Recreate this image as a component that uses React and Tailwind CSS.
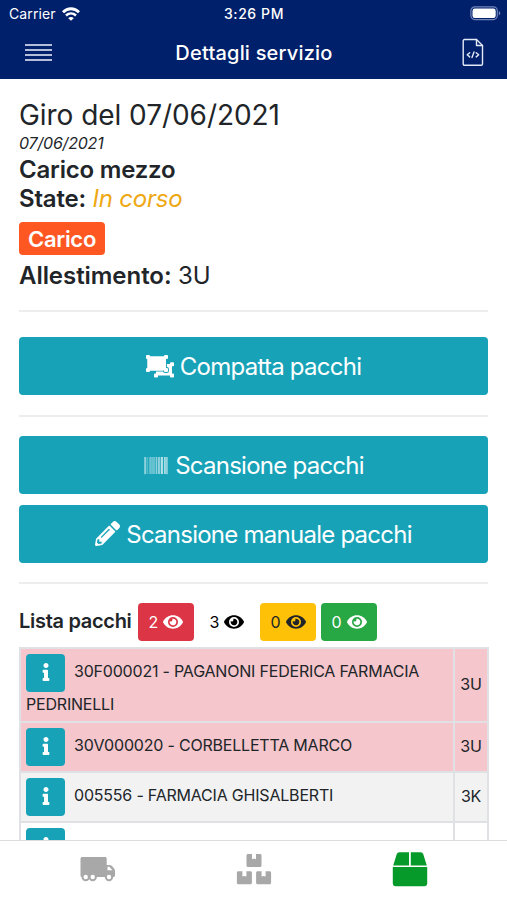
import React from "react";
import { FaBarcode, FaEye, FaInfo, FaPencilAlt } from "react-icons/fa";

function StatusBar() {
  return (
    <div className="flex h-[27px] items-center justify-between pr-[6px] pl-[9px] text-[14px] leading-none">
      <div className="flex w-[100px] items-center gap-[6px]">
        <span className="tracking-[0.1px]">Carrier</span>
        <svg className="h-[14px] w-[18px]" viewBox="0 0 18 14" fill="none" stroke="white">
          <path d="M1 5.2C5.6.6 12.4.6 17 5.2" strokeWidth="2.8" />
          <path d="M4 8.5c3-2.8 7-2.8 10 0" strokeWidth="2.5" />
          <path d="M9 13.8 6.200 11.200c1.600-1.500 4-1.500 5.600 0z" fill="white" stroke="none" />
        </svg>
      </div>
      <span className="mr-[2px] text-[14px] font-medium tracking-[0.6px]">3:26 PM</span>
      <div className="flex w-[100px] justify-end">
        <svg className="h-[15px] w-[31px]" viewBox="0 0 31 15">
          <rect x=".9" y=".8" width="26.4" height="12.8" rx="4" fill="none" stroke="#7485b8" strokeWidth="1.2" />
          <rect x="2.5" y="2.5" width="23.2" height="9.6" rx="2.4" fill="white" />
          <path d="M28.8 5c2 .8 2 3.700 0 4.500z" fill="#7485b8" />
        </svg>
      </div>
    </div>
  );
}

function Header() {
  return (
    <header className="h-[79px] shrink-0 bg-[#00206b] text-white">
      <StatusBar />
      <div className="flex h-[50px] items-center justify-between pr-[23px] pl-[25px]">
        <div className="flex w-[27px] flex-col gap-[3px]">
          <div className="h-[2px] bg-[#b4bedb]" />
          <div className="h-[2px] bg-[#b4bedb]" />
          <div className="h-[2px] bg-[#b4bedb]" />
          <div className="h-[2px] bg-[#b4bedb]" />
        </div>
        <h1 className="mr-[6px] pt-[1px] text-[20px] font-medium tracking-[0.2px]">Dettagli servizio</h1>
        <svg className="h-[29px] w-[22px]" viewBox="0 0 22 29" fill="none" stroke="#e4e9f6" strokeWidth="1.4" strokeLinejoin="round" strokeLinecap="round">
          <path d="M2.500 1.500H14.500l6 6v18.500a1.300 1.300 0 0 1-1.300 1.300H2.500A1.300 1.300 0 0 1 1.200 26V2.800a1.300 1.300 0 0 1 1.300-1.300z" />
          <path d="M14.500 1.500v6h6" />
          <path d="M7.700 14.700 5.200 16.800l2.500 2.100M14.200 14.700l2.500 2.100-2.500 2.100M12 14l-2 5.500" strokeWidth="1.4" />
        </svg>
      </div>
    </header>
  );
}

function StackedFramesIcon() {
  return (
    <svg className="h-[23px] w-[28px]" viewBox="0 0 28 23" fill="white">
      <path d="M10 9h16v11.500H10z" />
      <rect x="24" y="7.200" width="4" height="4" rx="1" />
      <rect x="24" y="18.500" width="4" height="4" rx="1" />
      <rect x="8" y="18.500" width="4" height="4" rx="1" />
      <g stroke="#17a2b8" strokeWidth="1.8" paintOrder="stroke">
        <path d="M1.500 1.500h18.500v14H1.500z" />
        <rect x="18" y="13" width="4" height="4" rx="1" />
      </g>
      <path d="M1.500 1.500h18.500v14H1.500z" />
      <rect x="0" y="0" width="4" height="4" rx="1" />
      <rect x="18" y="0" width="4" height="4" rx="1" />
      <rect x="0" y="13" width="4" height="4" rx="1" />
    </svg>
  );
}

function ActionButton({ icon, children }) {
  return (
    <button className="flex h-[58px] w-full items-center justify-center gap-[6px] rounded-[4px] bg-[#17a2b8] text-[24px] tracking-[-0.75px] text-white">
      {icon}
      <span className="pt-[1px]">{children}</span>
    </button>
  );
}

function Counter({ value, className }) {
  return (
    <button className={`flex h-[38px] w-[56px] items-center justify-center gap-[5px] rounded-[4px] text-[16px] ${className}`}>
      <span>{value}</span>
      <FaEye className="mb-[1px] h-[18px] w-[20px]" />
    </button>
  );
}

function Row({ text, code, className }) {
  return (
    <tr className={className}>
      <td className="border-2 border-[#e0e1e5] py-[5px] pr-[5px] pl-[5px] leading-[24px]">
        <span className="mr-[9px] inline-flex h-[38px] w-[39px] items-center justify-center rounded-[4px] bg-[#17a2b8] pb-[2px] align-middle text-white">
          <FaInfo className="size-[18px]" />
        </span>
        {text}
      </td>
      <td className="border-2 border-[#e0e1e5] pb-[2px] text-center">{code}</td>
    </tr>
  );
}

function TabBar() {
  return (
    <nav className="grid h-[60px] shrink-0 grid-cols-3 justify-items-center border-t border-[#dcdcdc] bg-white pt-[11px]">
      <svg className="mr-[-26px] h-[36px] w-[36px]" viewBox="0 0 36 36" fill="#a8a8a8">
        <path d="M2.500 5H25c1 0 1.700.7 1.700 1.700V13h2.500c1.100 0 2 .4 2.800 1.100l2.100 2.500c.6.700.9 1.500.9 2.400v4c0 1.200-.6 1.900-1.500 1.900H2c-.9 0-1.500-.7-1.500-1.500V6.700C.5 5.700 1.400 5 2.500 5z" />
        <path d="M27.500 14.800h1.800l3.100 3.400h-4.900z" fill="white" />
        <g stroke="#a8a8a8" strokeWidth="2" fill="white">
          <circle cx="5.700" cy="25" r="3.200" />
          <circle cx="12.700" cy="25" r="3.200" />
          <circle cx="29" cy="25" r="3.200" />
        </g>
      </svg>
      <svg className="h-[36px] w-[36px]" viewBox="0 0 36 36" fill="#a8a8a8">
        <path id="crate" d="M12 2h4v5.300l2-.7 2 .7V2h4c.9 0 1.500.6 1.500 1.500v10c0 .9-.6 1.500-1.500 1.500H12c-.9 0-1.500-.6-1.500-1.500v-10c0-.9.6-1.500 1.500-1.500z" />
        <use href="#crate" x="-9.600" y="17.300" />
        <use href="#crate" x="9.600" y="17.300" />
      </svg>
      <svg className="mt-[-1px] ml-[-26px] h-[36px] w-[36px]" viewBox="0 0 36 36" fill="#069a2b">
        <path d="M7.500 1.200h9.500v13.300H1.200L4.700 3.200c.5-1.300 1.300-2 2.800-2zM18.800 1.200h9.700c1.500 0 2.300.7 2.800 2l3.500 11.300h-16zM.8 16h34.400v16.500c0 1.500-1.200 2.700-2.700 2.700h-29C2 35.200.8 34 .8 32.500z" />
      </svg>
    </nav>
  );
}

export default function App() {
  return (
    <div className="flex h-[900px] w-[507px] flex-col overflow-hidden bg-white font-['Inter','Liberation_Sans',sans-serif] text-[#212529]">
      <Header />
      <main className="min-h-0 flex-1 overflow-hidden px-[19px] pt-[19px]">
        <h2 className="h-[34px] text-[28px] leading-[34px] tracking-[-0.05px]">Giro del 07/06/2021</h2>
        <p className="h-[22px] text-[16px] leading-[22px] tracking-[-0.2px] italic">07/06/2021</p>
        <p className="h-[30px] text-[24px] leading-[31px] font-semibold tracking-[-0.2px]">Carico mezzo</p>
        <p className="h-[29px] text-[24px] leading-[30px] tracking-[-0.2px]">
          <span className="font-semibold">State:</span> <em className="text-[#eea814]">In corso</em>
        </p>
        <div className="mt-[9px] flex h-[33px] w-[86px] items-center justify-center rounded-[4px] bg-[#ff5722] pt-[1px] text-[22px] font-semibold tracking-[-0.3px] text-white">
          Carico
        </div>
        <p className="mt-[6px] h-[30px] text-[24px] leading-[30px] tracking-[-0.2px]">
          <span className="font-semibold tracking-[-0.05px]">Allestimento:</span> 3U
        </p>
        <hr className="mt-[19px] border-t-2 border-[#ededed]" />
        <div className="mt-[25px]">
          <ActionButton icon={<StackedFramesIcon />}>Compatta pacchi</ActionButton>
        </div>
        <hr className="mt-[20px] border-t-2 border-[#ededed]" />
        <div className="mt-[19px] flex flex-col gap-[11px]">
          <ActionButton icon={<FaBarcode className="h-[23px] w-[26px] opacity-85" />}>Scansione pacchi</ActionButton>
          <ActionButton icon={<FaPencilAlt className="mb-[2px] size-[25px]" />}>Scansione manuale pacchi</ActionButton>
        </div>
        <hr className="mt-[19px] border-t-2 border-[#ededed]" />
        <div className="mt-[19px] flex h-[38px] items-center gap-[5px]">
          <span className="w-[114px] pb-[2px] text-[20px] font-semibold tracking-[-0.3px] whitespace-nowrap">Lista pacchi</span>
          <Counter value="2" className="bg-[#dc3545] text-white" />
          <Counter value="3" className="bg-white text-black" />
          <Counter value="0" className="bg-[#ffc107] text-[#212529]" />
          <Counter value="0" className="bg-[#28a745] text-white" />
        </div>
        <table className="mt-[6px] w-[470px] table-fixed border-collapse text-[16px] tracking-[-0.2px]">
          <colgroup>
            <col />
            <col className="w-[34px]" />
          </colgroup>
          <tbody>
            <Row text="30F000021 - PAGANONI FEDERICA FARMACIA PEDRINELLI" code="3U" className="bg-[#f5c6cb]" />
            <Row text="30V000020 - CORBELLETTA MARCO" code="3U" className="bg-[#f5c6cb]" />
            <Row text="005556 - FARMACIA GHISALBERTI" code="3K" className="bg-[#f2f2f2]" />
            <Row text="" code="" className="bg-white" />
          </tbody>
        </table>
      </main>
      <TabBar />
    </div>
  );
}
